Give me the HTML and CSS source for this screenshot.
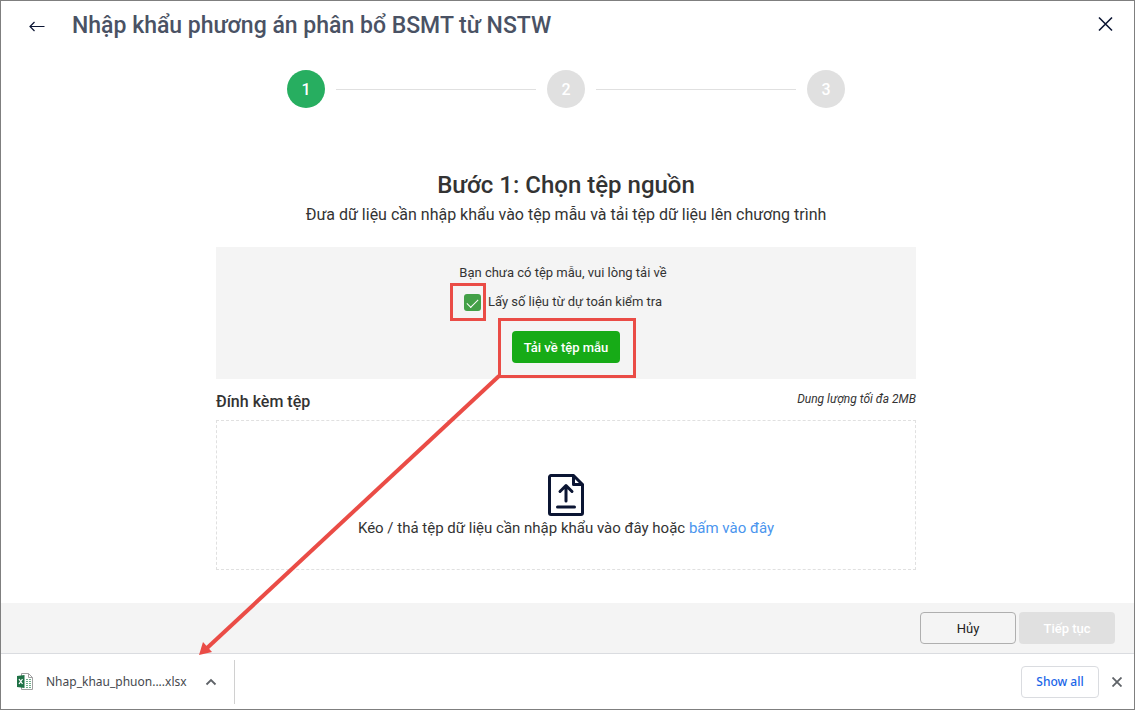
FILE: index.html
```html
<!DOCTYPE html>
<html lang="vi">
<head>
    <meta charset="UTF-8">
    <meta name="viewport" content="width=device-width, initial-scale=1.0">
    <title>Nhập khẩu phương án phân bổ BSMT từ NSTW</title>
    <link rel="stylesheet" href="styles.css">
</head>
<body>
    <div class="window">
        <header class="header">
            <button class="icon-btn" type="button" aria-label="Quay lại">
                <svg width="16" height="12" viewBox="0 0 16 12" fill="none" stroke="#0b1533" stroke-width="1.2">
                    <path d="M15.5 6.500H1M5.5 2L1 6.500l4.500 4.500"/>
                </svg>
            </button>
            <h1 class="title">Nhập khẩu phương án phân bổ BSMT từ NSTW</h1>
            <button class="icon-btn btn-close" type="button" aria-label="Đóng">
                <svg width="16" height="16" viewBox="0 0 16 16" fill="none" stroke="#0b1533" stroke-width="1.6">
                    <path d="M1 1.500l13 13M14 1.500l-13 13"/>
                </svg>
            </button>
        </header>

        <main class="main">
            <!-- Steps -->
            <div class="steps">
                <span class="step active">1</span>
                <span class="step-line"></span>
                <span class="step">2</span>
                <span class="step-line"></span>
                <span class="step">3</span>
            </div>

            <h2 class="step-title">Bước 1: Chọn tệp nguồn</h2>
            <p class="step-desc">Đưa dữ liệu cần nhập khẩu vào tệp mẫu và tải tệp dữ liệu lên chương trình</p>

            <!-- Template download -->
            <section class="template">
                <p class="template-text">Bạn chưa có tệp mẫu, vui lòng tải về</p>
                <div class="check-row">
                    <span class="marked">
                        <input class="check" type="checkbox" id="estimate" checked>
                        <span class="mark mark-check"></span>
                    </span>
                    <label for="estimate">Lấy số liệu từ dự toán kiểm tra</label>
                </div>
                <div class="marked">
                    <button class="btn btn-download" type="button">Tải về tệp mẫu</button>
                    <span class="mark mark-button"></span>
                    <svg class="mark-arrow" width="304" height="284" viewBox="0 0 304 284">
                        <path d="M302 2L9 275" fill="none" stroke="#ea4c46" stroke-width="4"/>
                        <path d="M2 281l4-13 9 10z" fill="#ea4c46"/>
                    </svg>
                </div>
            </section>

            <!-- Attachment -->
            <section class="attach">
                <div class="attach-head">
                    <h3 class="attach-title">Đính kèm tệp</h3>
                    <span class="attach-limit">Dung lượng tối đa 2MB</span>
                </div>
                <div class="dropzone">
                    <svg width="36" height="42" viewBox="0 0 36 42" fill="none" stroke="#0b1533" stroke-width="3" stroke-linecap="round" stroke-linejoin="round">
                        <path d="M3 1.500h22.500l9 9V39a1.500 1.500 0 0 1-1.500 1.500H3A1.500 1.500 0 0 1 1.500 39V3A1.500 1.500 0 0 1 3 1.500z"/>
                        <path d="M25.500 2v8.500H34"/>
                        <path d="M18 27V11.500M12 17.500l6-6 6 6M9.500 33h17"/>
                    </svg>
                    <p class="drop-text">Kéo / thả tệp dữ liệu cần nhập khẩu vào đây hoặc <a class="link" href="#">bấm vào đây</a></p>
                </div>
            </section>
        </main>

        <footer class="actions">
            <button class="btn btn-cancel" type="button">Hủy</button>
            <button class="btn btn-next" type="button" disabled>Tiếp tục</button>
        </footer>

        <!-- Browser download bar -->
        <div class="downloads">
            <div class="file">
                <svg width="17" height="17" viewBox="0 0 17 17">
                    <path d="M4.500.5h7l4 4v12h-11z" fill="#fff" stroke="#a0a0a0"/>
                    <path d="M11.500.5v4h4" fill="none" stroke="#a0a0a0"/>
                    <path d="M9 6.500h2M12 6.500h2M9 8.500h2M12 8.500h2M9 10.500h2M12 10.500h2M9 12.500h2M12 12.500h2M9 14.500h2M12 14.500h2" stroke="#6fae8b"/>
                    <path d="M0 3l7.500-1v13L0 14z" fill="#1e7145"/>
                    <path d="M2 6l3.500 5M5.500 6L2 11" stroke="#fff" stroke-width="1.300"/>
                </svg>
                <span class="file-name">Nhap_khau_phuon....xlsx</span>
                <button class="icon-btn" type="button" aria-label="Tùy chọn">
                    <svg width="12" height="8" viewBox="0 0 12 8" fill="none" stroke="#5f6368" stroke-width="1.800">
                        <path d="M1.500 6.500L6 2l4.500 4.500"/>
                    </svg>
                </button>
            </div>
            <button class="show-all" type="button">Show all</button>
            <button class="icon-btn" type="button" aria-label="Close">
                <svg width="10" height="10" viewBox="0 0 10 10" fill="none" stroke="#5f6368" stroke-width="1.800">
                    <path d="M.5.5l9 9M9.500.5l-9 9"/>
                </svg>
            </button>
        </div>
    </div>
</body>
</html>
```
FILE: styles.css
```css
* {
    box-sizing: border-box;
}
body {
    margin: 0;
    font-family: Roboto, "Liberation Sans", sans-serif;
    font-size: 13px;
    color: #333;
    background: #fff;
}
h1, h2, h3, p {
    margin: 0;
    font-weight: 400;
}
button {
    font-family: inherit;
    cursor: pointer;
}
svg {
    display: block;
}
.window {
    display: flex;
    flex-direction: column;
    min-height: 100vh;
    border: 1px solid #7f7f7f;
    overflow: hidden;
}

/* Header */
.header {
    display: flex;
    align-items: center;
    height: 50px;
    padding: 0 20px 0 28px;
}
.icon-btn {
    padding: 0;
    border: none;
    background: none;
}
.btn-close {
    padding-bottom: 4px;
}
.title {
    flex: 1;
    margin-left: 27px;
    font-size: 23px;
    line-height: 34px;
    font-weight: 500;
    color: #4a5264;
}

/* Content */
.main {
    flex: 1;
    display: flex;
    flex-direction: column;
    align-items: center;
    padding: 19px 3px 32px 0;
}
.steps {
    display: flex;
    align-items: center;
    gap: 11px;
}
.step {
    width: 38px;
    height: 38px;
    border-radius: 50%;
    background: #e0e0e0;
    color: #fff;
    font-size: 16px;
    line-height: 40px;
    font-weight: 500;
    text-align: center;
}
.step.active {
    background: #27ae60;
}
.step-line {
    width: 200px;
    height: 1px;
    background: #e0e0e0;
}
.step-title {
    margin-top: 61px;
    font-size: 24px;
    line-height: 32px;
    font-weight: 500;
}
.step-desc {
    margin-top: 4px;
    font-size: 16px;
    line-height: 20px;
}
.template {
    display: flex;
    flex-direction: column;
    align-items: center;
    width: 100%;
    max-width: 700px;
    margin-top: 22px;
    padding: 16px 0;
    background: #f4f4f4;
}
.template-text {
    padding-right: 6px;
    line-height: 20px;
}
.check-row {
    display: flex;
    align-items: center;
    gap: 7px;
    margin: 8px 0 18px;
    padding-right: 6px;
    line-height: 22px;
}
.check {
    display: flex;
    justify-content: center;
    appearance: none;
    width: 17px;
    height: 17px;
    margin: 0;
    border-radius: 3px;
    background: #43a047;
}
.check::before {
    content: "";
    width: 10px;
    height: 5px;
    margin-top: 5px;
    border: solid #fff;
    border-width: 0 0 1px 1px;
    transform: rotate(-45deg);
}
.check:not(:checked)::before {
    display: none;
}
.btn {
    height: 32px;
    border: none;
    border-radius: 4px;
    font-size: 13px;
    font-weight: 500;
}
.btn-download {
    display: block;
    width: 108px;
    padding: 0;
    background: #17ab17;
    color: #fff;
}

/* Red marks over the controls */
.marked {
    position: relative;
}
.mark {
    position: absolute;
    border: 3px solid #ea4c46;
    pointer-events: none;
}
.mark-check {
    inset: -11px -5px -10px -14px;
}
.mark-button {
    inset: -13px -16px -15px -14px;
}
.mark-arrow {
    position: absolute;
    top: 43px;
    right: 119px;
    pointer-events: none;
}

/* Attachment */
.attach {
    width: 100%;
    max-width: 700px;
}
.attach-head {
    display: flex;
    justify-content: space-between;
    padding: 10px 0 5px;
}
.attach-title {
    font-size: 16px;
    line-height: 26px;
    font-weight: 500;
}
.attach-limit {
    font-size: 12px;
    line-height: 20px;
    font-style: italic;
}
.dropzone {
    display: flex;
    flex-direction: column;
    align-items: center;
    height: 150px;
    padding-top: 53px;
    border: 1px dashed #e0e0e0;
}
.drop-text {
    margin-top: 2px;
    font-size: 15px;
    line-height: 20px;
}
.link {
    color: #4a95ee;
    text-decoration: none;
}

/* Actions */
.actions {
    display: flex;
    justify-content: flex-end;
    gap: 3px;
    padding: 9px 19px;
    background: #f4f4f4;
}
.btn-cancel {
    width: 96px;
    border: 1px solid #afafaf;
    background: transparent;
    color: #212121;
    font-weight: 400;
}
.btn-next {
    width: 96px;
    background: #e0e0e0;
    color: #fff;
}

/* Download bar */
.downloads {
    display: flex;
    align-items: center;
    height: 56px;
    padding-right: 12px;
    border-top: 1px solid #dadce0;
    background: #fff;
}
.file {
    display: flex;
    align-items: center;
    height: 44px;
    padding: 0 17px 0 16px;
    border-right: 1px solid #d0d0d0;
}
.file-name {
    margin: 0 18px 0 12px;
    font-family: "Noto Sans", "Open Sans", sans-serif;
    font-size: 12px;
    color: #45484d;
}
.show-all {
    width: 78px;
    height: 32px;
    margin: 0 13px 0 auto;
    border: 1px solid #dadce0;
    border-radius: 4px;
    background: #fff;
    color: #1a66e8;
    font-family: "Noto Sans", "Open Sans", sans-serif;
    font-size: 12px;
    font-weight: 500;
}
```
